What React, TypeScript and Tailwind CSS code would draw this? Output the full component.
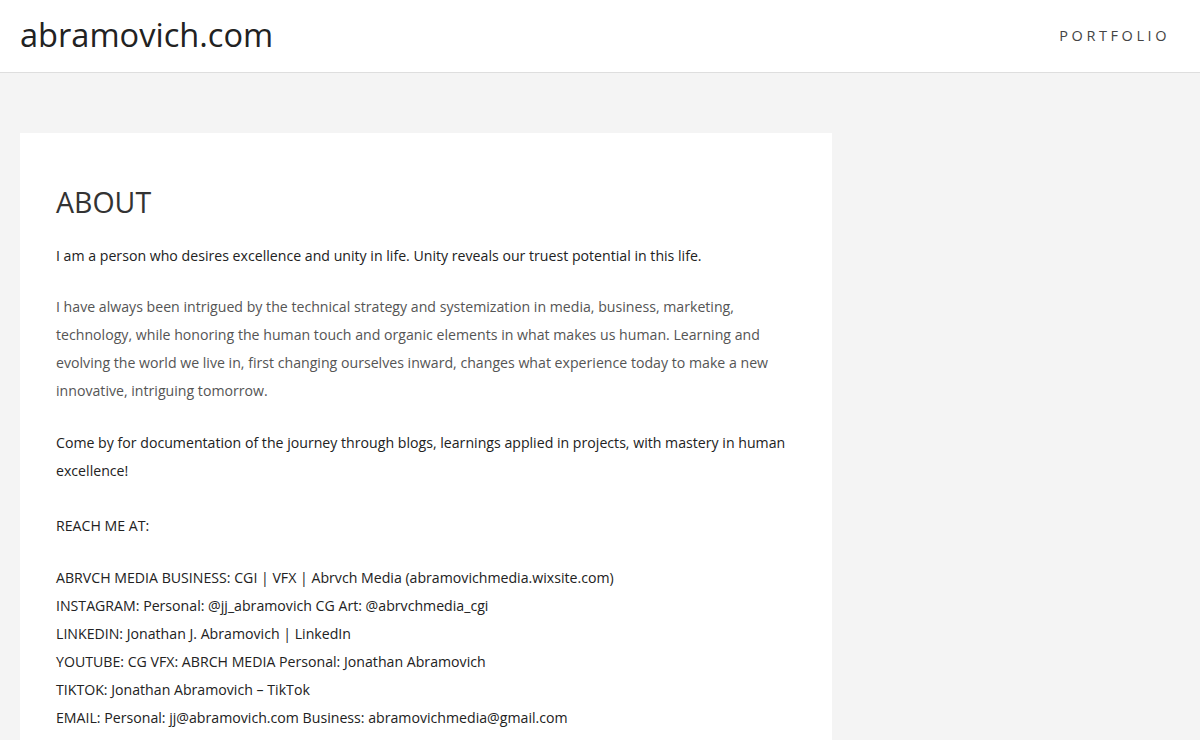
export default function App() {
  const font = { fontFamily: "'Open Sans', 'Noto Sans', sans-serif" };
  return (
    <div className="min-h-[740px] bg-[#f4f4f4]" style={font}>
      <header className="h-[73px] bg-white border-b border-[#dedede] flex items-center justify-between pl-[20px] pr-[30px]">
        <div className="text-[32.6px] leading-none text-[#222] pb-[2px]">abramovich.com</div>
        <nav className="text-[14.5px] tracking-[0.246em] text-[#444] uppercase">Portfolio</nav>
      </header>
      <main className="pt-[60px] px-[20px]">
        <article className="w-[812px] bg-white pl-[36px] pr-[36px] pt-[52px] pb-[40px] text-[14.15px] leading-[28px] text-[#222]">
          <h1 className="text-[28.5px] leading-[1.2] text-[#333] mb-[23px]">ABOUT</h1>
          <p className="mb-[23px]">I am a person who desires excellence and unity in life. Unity reveals our truest potential in this life.</p>
          <p className="mb-[24px] text-[#555]">
            I have always been intrigued by the technical strategy and systemization in media, business, marketing, technology, while honoring the human touch and organic elements in what makes us human. Learning and evolving the world we live in, first changing ourselves inward, changes what experience today to make a new innovative, intriguing tomorrow.
          </p>
          <p className="mb-[27px]">Come by for documentation of the journey through blogs, learnings applied in projects, with mastery in human excellence!</p>
          <p className="mb-[24px]">REACH ME AT:</p>
          <p>
            ABRVCH MEDIA BUSINESS: CGI | VFX | Abrvch Media (abramovichmedia.wixsite.com)<br />
            INSTAGRAM: Personal: @jj_abramovich CG Art: @abrvchmedia_cgi<br />
            LINKEDIN: Jonathan J. Abramovich | LinkedIn<br />
            YOUTUBE: CG VFX: ABRCH MEDIA Personal: Jonathan Abramovich<br />
            TIKTOK: Jonathan Abramovich – TikTok<br />
            EMAIL: Personal: jj@abramovich.com Business: abramovichmedia@gmail.com
          </p>
        </article>
      </main>
    </div>
  );
}
